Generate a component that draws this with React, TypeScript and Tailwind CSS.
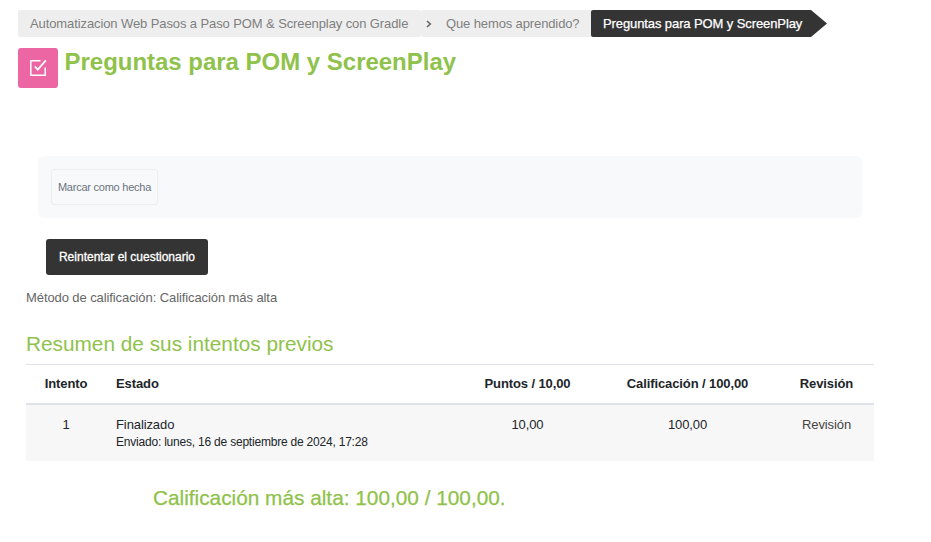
const attempts = [
  {
    number: '1',
    state: 'Finalizado',
    submitted: 'Enviado: lunes, 16 de septiembre de 2024, 17:28',
    points: '10,00',
    grade: '100,00',
  },
];

function Breadcrumbs() {
  return (
    <nav className="flex h-[27px] items-stretch text-[13px] leading-[27px] whitespace-nowrap text-[#7f7f7f]">
      <div className="flex w-[403px] rounded-xs bg-[#eeeeee] pl-3">
        <a className="tracking-[-0.1px]">Automatizacion Web Pasos a Paso POM &amp; Screenplay con Gradle</a>
      </div>
      <div className="flex w-[170px] items-center rounded-l-xs bg-[#eeeeee]">
        <svg className="ml-[5px] h-2 w-[6px]" viewBox="0 0 6 8" fill="none" stroke="#666" strokeWidth="1.6">
          <path d="M1 1l3.3 3L1 7" />
        </svg>
        <a className="ml-[14px] tracking-[-0.12px]">Que hemos aprendido?</a>
      </div>
      <div className="flex w-[220px] rounded-l-xs bg-[#343434] pl-3 text-white">
        <span className="tracking-[-0.1px] [-webkit-text-stroke:0.25px_white]">Preguntas para POM y ScreenPlay</span>
      </div>
      <svg className="h-[27px] w-4" viewBox="0 0 16 27" fill="#343434">
        <path d="M0 0l16 13.5L0 27z" />
      </svg>
    </nav>
  );
}

function QuizIcon() {
  return (
    <div className="flex size-10 items-center justify-center rounded-[3px] bg-[#eb66a2]">
      <svg className="size-[18px]" viewBox="0 0 18 18" fill="none" stroke="white" strokeWidth="1.5">
        <path d="M11.5 1.8H1.8v14.4h14.4V8.5" />
        <path d="M5.8 7.4l3 3.2 8-9.2" strokeWidth="1.8" />
      </svg>
    </div>
  );
}

export default function App() {
  return (
    <main className="h-[542px] overflow-hidden bg-white pt-[10px] pl-[18px] font-['Liberation_Sans',Arial,sans-serif] text-[13px] text-[#212529]">
      <Breadcrumbs />
      <header className="mt-[11px] flex h-10 gap-[6.5px]">
        <QuizIcon />
        <h1 className="text-[24px] leading-7 font-bold tracking-[-0.02px] whitespace-nowrap text-[#8fc24a]">
          Preguntas para POM y ScreenPlay
        </h1>
      </header>

      <section className="mt-[68px] ml-5 h-[62px] w-[824px] rounded-md bg-[#f8f9fb] p-[13px]">
        <button className="h-9 w-[107px] rounded-[3px] border border-[#eceef1] text-[11px] tracking-[-0.24px] whitespace-nowrap text-[#6a737b]">
          Marcar como hecha
        </button>
      </section>

      <div className="ml-2 w-[848px]">
        <button className="mt-[21px] ml-5 block h-9 w-[162px] rounded-[3px] bg-[#343434] text-[12px] whitespace-nowrap text-white [-webkit-text-stroke:0.3px_white]">
          Reintentar el cuestionario
        </button>
        <p className="mt-[13px] leading-5 tracking-[-0.09px] text-[#666]">
          Método de calificación: Calificación más alta
        </p>
        <h3 className="mt-[23px] text-[20.8px] leading-[26px] text-[#8fc24a]">Resumen de sus intentos previos</h3>

        <table className="mt-[7px] w-full table-fixed border-collapse text-center">
          <colgroup>
            <col className="w-[80px]" />
            <col className="w-[350px]" />
            <col className="w-[143px]" />
            <col className="w-[179px]" />
            <col className="w-[96px]" />
          </colgroup>
          <thead>
            <tr className="h-[39px] border-t border-b-2 border-[#dee2e6] leading-[18px] tracking-[-0.1px]">
              <th className="pt-px">Intento</th>
              <th className="pt-px pl-[10px] text-left">Estado</th>
              <th className="pt-px">Puntos / 10,00</th>
              <th className="pt-px pr-0.5">Calificación / 100,00</th>
              <th className="pt-px pl-px">Revisión</th>
            </tr>
          </thead>
          <tbody>
            {attempts.map((a) => (
              <tr key={a.number} className="h-[57px] bg-[#f7f7f7] align-top leading-[18px] tracking-[-0.1px]">
                <td className="pt-[11px]">{a.number}</td>
                <td className="pt-[11px] pl-[10px] text-left">
                  {a.state}
                  <span className="block text-[12px] leading-4 tracking-[-0.21px]">{a.submitted}</span>
                </td>
                <td className="pt-[11px]">{a.points}</td>
                <td className="pt-[11px] pr-0.5">{a.grade}</td>
                <td className="pt-[11px] pl-px text-[#444]">Revisión</td>
              </tr>
            ))}
          </tbody>
        </table>
        <h3 className="mt-[24px] ml-[127px] text-[20.8px] leading-[26px] text-[#8fc24a] [-webkit-text-stroke:0.25px_#8fc24a]">
          Calificación más alta: 100,00 / 100,00.
        </h3>
      </div>
    </main>
  );
}
